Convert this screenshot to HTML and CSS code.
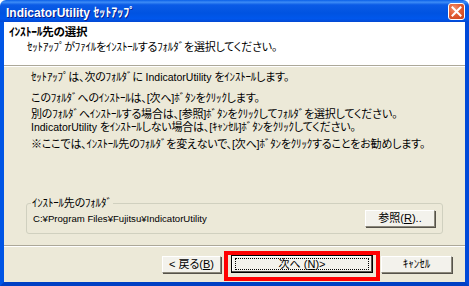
FILE: index.html
```html
<!DOCTYPE html>
<html>
<head lang="ja">
    <meta charset="UTF-8">
    <title>IndicatorUtility ｾｯﾄｱｯﾌﾟ</title>
    <link rel="stylesheet" href="styles.css">
</head>
<body>
<div class="window">
    <div class="titlebar">
        <span class="title">IndicatorUtility ｾｯﾄｱｯﾌﾟ</span>
        <span class="close">
            <svg width="11" height="11" viewBox="0 0 11 11"><path d="M1.5 1.5L9.5 9.5M9.5 1.5L1.5 9.5" stroke="#fff" stroke-width="2" stroke-linecap="square"/></svg>
        </span>
    </div>
    <div class="frame">
        <div class="header">
            <div class="h-title">ｲﾝｽﾄｰﾙ先の選択</div>
            <div class="h-sub">ｾｯﾄｱｯﾌﾟがﾌｧｲﾙをｲﾝｽﾄｰﾙするﾌｫﾙﾀﾞを選択してください。</div>
        </div>
        <div class="main">
            <p class="p1">ｾｯﾄｱｯﾌﾟは、次のﾌｫﾙﾀﾞに <span class="en">IndicatorUtility</span> をｲﾝｽﾄｰﾙします。</p>
            <p class="p2">このﾌｫﾙﾀﾞへのｲﾝｽﾄｰﾙは、[次へ]ﾎﾞﾀﾝをｸﾘｯｸします。</p>
            <div class="p3">
                <p>別のﾌｫﾙﾀﾞへｲﾝｽﾄｰﾙする場合は、[参照]ﾎﾞﾀﾝをｸﾘｯｸしてﾌｫﾙﾀﾞを選択してください。</p>
                <p><span class="en">IndicatorUtility</span> をｲﾝｽﾄｰﾙしない場合は、[ｷｬﾝｾﾙ]ﾎﾞﾀﾝをｸﾘｯｸしてください。</p>
            </div>
            <p class="p4">※ここでは、ｲﾝｽﾄｰﾙ先のﾌｫﾙﾀﾞを変えないで、[次へ]ﾎﾞﾀﾝをｸﾘｯｸすることをお勧めします。</p>
            <fieldset class="group">
                <legend>ｲﾝｽﾄｰﾙ先のﾌｫﾙﾀﾞ</legend>
                <div class="group-row">
                    <span class="path">C:¥Program Files¥Fujitsu¥IndicatorUtility</span>
                    <button class="btn btn-browse">参照(<u>R</u>)..</button>
                </div>
            </fieldset>
        </div>
        <div class="footer">
            <button class="btn btn-back">&lt; 戻る(<u>B</u>)</button>
            <div class="mark">
                <button class="btn btn-next"><span class="focus">次へ (<u>N</u>)&gt;</span></button>
            </div>
            <button class="btn btn-cancel">ｷｬﾝｾﾙ</button>
        </div>
    </div>
</div>
</body>
</html>
```

FILE: styles.css
```css
*{
    margin: 0;
    padding: 0;
    box-sizing: border-box;
}
body{
    width: 469px;
    height: 286px;
    overflow: hidden;
    font-family: "Liberation Sans", "Noto Sans CJK JP", sans-serif;
    font-size: 11px;
    font-feature-settings: "palt";
    letter-spacing: -0.2px;
    color: #000;
}
.en{
    display: inline-block;
    font-size: 10.5px;
    line-height: 11px;
    letter-spacing: 0;
}
.window{
    width: 469px;
    height: 286px;
    display: flex;
    flex-direction: column;
}
.titlebar{
    height: 22px;
    display: flex;
    align-items: center;
    justify-content: space-between;
    padding: 0 4px 0 6px;
    border-radius: 6px 6px 0 0;
    background: linear-gradient(#0a5fe8 0%, #3d8cf6 10%, #0b5be6 22%, #0053e1 60%, #0057ec 85%, #0348d2 100%);
}
.title{
    color: #fff;
    font-weight: bold;
    font-size: 12px;
    letter-spacing: 0;
    text-shadow: 1px 1px 0 #0a1e8c;
}
.close{
    width: 17px;
    height: 17px;
    margin-top: 1px;
    display: flex;
    align-items: center;
    justify-content: center;
    border: 1px solid #fff;
    border-radius: 3px;
    background: radial-gradient(circle at 35% 30%, #f2906c 0%, #e25d33 45%, #c7401b 100%);
}
.frame{
    flex: 1;
    display: flex;
    flex-direction: column;
    border-left: 4px solid #0055e5;
    border-right: 4px solid #0049d8;
    border-bottom: 4px solid #0040c4;
    background: #ece9d8;
}
.header{
    height: 44px;
    background: #fff;
    padding: 4px 0 0 5px;
    border-bottom: 1px solid #aca899;
    box-shadow: 0 1px 0 #fff;
}
.h-title{
    font-weight: bold;
    font-size: 11.5px;
    line-height: 13px;
}
.h-sub{
    margin: 2px 0 0 18px;
    line-height: 13px;
}
.main{
    flex: 1;
    display: flex;
    flex-direction: column;
    padding: 6px 22px 0 22px;
}
.main p{
    margin-left: 1px;
    line-height: 11px;
    padding-left: 4px;
    white-space: nowrap;
}
.p2{
    margin-top: 10px;
}
.p3{
    margin-top: 4px;
}
.main .p3 p{
    line-height: 13px;
}
.p4{
    margin-top: 5px;
}
.group{
    margin-top: auto;
    margin-bottom: 11px;
    height: 37px;
    border: 1px solid #d0d0bf;
    border-radius: 3px;
    padding: 0 7px 0 6px;
}
.group legend{
    margin-left: -2px;
    padding: 0 1px;
    line-height: 12px;
}
.group-row{
    display: flex;
    align-items: center;
    justify-content: space-between;
    margin-top: 1px;
}
.path{
    font-size: 9.6px;
    letter-spacing: 0;
}
.btn{
    font: inherit;
    font-feature-settings: "palt";
    letter-spacing: 0;
    height: 17px;
    background: #f3f2ec;
    border: 1px solid;
    border-color: #fff #8a877a #8a877a #fff;
    box-shadow: 1px 1px 0 #55524a;
    color: #000;
    line-height: 13px;
}
.btn-browse{
    width: 70px;
}
.footer{
    height: 37px;
    border-top: 1px solid #aca899;
    box-shadow: inset 0 1px 0 #fff;
    display: flex;
    justify-content: flex-end;
    align-items: flex-start;
    padding: 5px 13px 0 0;
}
.btn-back{
    width: 59px;
    margin-top: 5px;
    margin-right: 3px;
}
.btn-cancel{
    width: 71px;
    margin-top: 5px;
    margin-left: 1px;
}
.mark{
    height: 30px;
    border: 4px solid #f00;
    padding: 0 3px;
}
.btn-next{
    width: 142px;
    height: 18px;
    border: 1px solid #000;
    box-shadow: inset -1px -1px 0 #55524a, inset 1px 1px 0 #fff;
    padding: 2px 3px;
    display: flex;
}
.focus{
    flex: 1;
    border: 1px dotted #000;
    line-height: 10px;
    text-align: center;
}
```
